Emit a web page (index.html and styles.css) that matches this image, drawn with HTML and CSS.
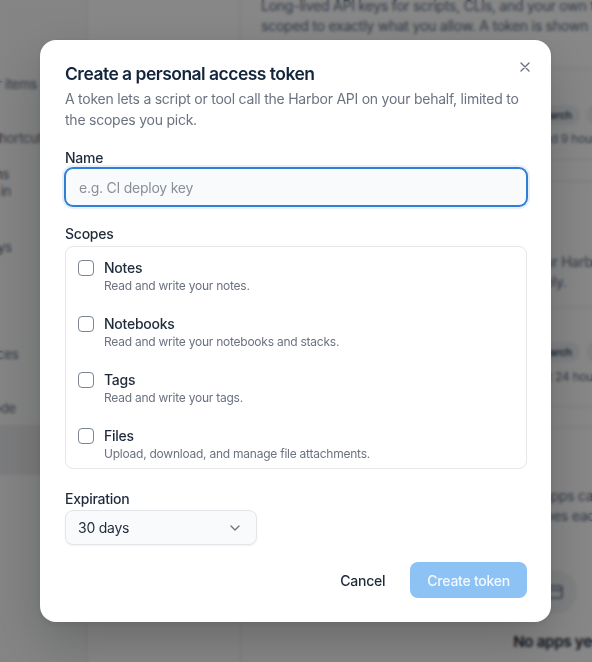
FILE: index.html
```html
<!DOCTYPE html>
<html lang="en">
<head>
<meta charset="utf-8">
<title>Create a personal access token</title>
<link rel="stylesheet" href="styles.css">
</head>
<body>
<div class="app">
  <aside class="rail">
    <div class="rail-item r1">Sidebar items</div>
    <div class="rail-item r2">Show shortcuts</div>
    <div class="rail-item r3">Sessions<br>Signed in</div>
    <div class="rail-item r4">Passkeys</div>
    <div class="rail-item r5">Resources</div>
    <div class="rail-item r6">Zen mode</div>
    <div class="rail-active"></div>
  </aside>
  <nav class="subnav"></nav>
  <main class="main">
    <p class="m-text m-intro">Long-lived API keys for scripts, CLIs, and your own tools,<br>scoped to exactly what you allow. A token is shown only once.</p>
    <section class="card card-a">
      <div class="card-row">
        <div class="row-name"></div>
        <div class="row-side">
          <div class="chips"><span class="chip">search</span><span class="chip">notes:read</span></div>
          <div class="meta">Used 9 hours ago</div>
        </div>
      </div>
      <div class="card-foot"></div>
    </section>
    <p class="m-text m-sec2">Each token can read and write the data in your Harbor account.<br>Revoking a token cuts off its access completely.</p>
    <section class="card card-b">
      <div class="card-row">
        <div class="row-name"></div>
        <div class="row-side">
          <div class="chips"><span class="chip">search</span><span class="chip">files</span></div>
          <div class="meta">Last 24 hours</div>
        </div>
      </div>
      <div class="card-foot"></div>
    </section>
    <p class="m-text m-sec3">Websites and tools you approve with OAuth apps can access your data.<br>They only see what you allow, within the scopes each app requested.</p>
    <div class="empty">
      <div class="empty-tile">
        <svg width="18" height="18" viewBox="0 0 18 18" fill="none" stroke="#64748b" stroke-width="1.6"><rect x="2" y="3" width="14" height="12" rx="2"/><path d="M2 7h14"/></svg>
      </div>
      <div class="empty-title">No apps yet</div>
    </div>
  </main>
</div>

<div class="overlay">
  <div class="modal" role="dialog" aria-labelledby="dlg-title">
    <button class="close" type="button" aria-label="Close">
      <svg width="10" height="10" viewBox="0 0 10 10" fill="none" stroke="#6b7280" stroke-width="1.4" stroke-linecap="round"><path d="M1 1l8 8M9 1L1 9"/></svg>
    </button>
    <h2 class="title" id="dlg-title">Create a personal access token</h2>
    <p class="desc">A token lets a script or tool call the Harbor API on your behalf, limited to the scopes you pick.</p>

    <label class="field-label label-name" for="tok-name">Name</label>
    <input class="input" id="tok-name" type="text" placeholder="e.g. CI deploy key">

    <div class="field-label label-scopes">Scopes</div>
    <div class="scopes">
      <label class="scope">
        <span class="check"></span>
        <span class="scope-text"><span class="scope-title">Notes</span><span class="scope-desc">Read and write your notes.</span></span>
      </label>
      <label class="scope">
        <span class="check"></span>
        <span class="scope-text"><span class="scope-title">Notebooks</span><span class="scope-desc">Read and write your notebooks and stacks.</span></span>
      </label>
      <label class="scope">
        <span class="check"></span>
        <span class="scope-text"><span class="scope-title">Tags</span><span class="scope-desc">Read and write your tags.</span></span>
      </label>
      <label class="scope">
        <span class="check"></span>
        <span class="scope-text"><span class="scope-title">Files</span><span class="scope-desc">Upload, download, and manage file attachments.</span></span>
      </label>
    </div>

    <div class="field-label label-exp">Expiration</div>
    <button class="select" type="button">
      <span>30 days</span>
      <svg width="10" height="6" viewBox="0 0 10 6" fill="none" stroke="#6b7280" stroke-width="1.3" stroke-linecap="round" stroke-linejoin="round"><path d="M1 1l4 4 4-4"/></svg>
    </button>

    <div class="actions">
      <button class="btn btn-cancel" type="button">Cancel</button>
      <button class="btn btn-primary" type="button" disabled>Create token</button>
    </div>
  </div>
</div>
</body>
</html>
```
FILE: styles.css
```css
* { box-sizing: border-box; }
html, body { margin: 0; height: 100%; }
body {
  font-family: Inter, "Noto Sans", "Liberation Sans", sans-serif;
  letter-spacing: -0.015em;
  background: #fff;
  overflow: hidden;
}
button, input { letter-spacing: inherit; }

/* ---------- background page ---------- */
.app {
  display: flex;
  height: 662px;
}
.rail {
  width: 87px;
  flex: none;
  background: #f9fafb;
  border-right: 1px solid #e5e7eb;
  display: flex;
  flex-direction: column;
  overflow: hidden;
}
.rail-item {
  font-size: 13px;
  line-height: 18px;
  color: #6b7280;
  white-space: nowrap;
  margin-left: -44px;
}
.r1 { margin-top: 75px; }
.r2 { margin-top: 36px; }
.r3 { margin-top: 19px; line-height: 17px; }
.r4 { margin-top: 38px; }
.r5 { margin-top: 89px; }
.r6 { margin-top: 36px; }
.rail-active {
  margin-top: 8px;
  height: 50px;
  background: #e9eaec;
}
.subnav {
  width: 154px;
  flex: none;
  border-right: 1px solid #e5e7eb;
  background: #fff;
}
.main {
  flex: 1;
  padding-left: 20px;
  overflow: hidden;
  min-width: 0;
}
.main > * { width: 560px; }
.m-text {
  margin: 0;
  font-size: 14px;
  line-height: 20px;
  color: #64748b;
  white-space: nowrap;
}
.m-intro { margin-top: -4px; }
.m-sec2 { margin-top: 70px; }
.m-sec3 { margin-top: 58px; }
.card {
  border: 1px solid #e5e7eb;
  border-radius: 10px;
}
.card-a { margin-top: 32px; }
.card-b { margin-top: 15px; }
.card-row {
  display: flex;
  padding: 36px 0 11px 16px;
  border-bottom: 1px solid #e5e7eb;
}
.card-b .card-row { padding-top: 34px; padding-bottom: 20px; }
.row-name {
  width: 251px;
  flex: none;
}
.chips { display: flex; gap: 6px; }
.chip {
  height: 20px;
  line-height: 20px;
  padding: 0 8px;
  border-radius: 10px;
  background: #eef1f5;
  color: #475569;
  font-size: 11px;
  font-weight: 600;
}
.meta {
  margin-top: 5px;
  font-size: 12px;
  line-height: 18px;
  color: #64748b;
}
.card-b .meta { margin-top: 6px; }
.card-foot { height: 21px; }
.card-b .card-foot { height: 20px; }
.empty {
  width: 200px;
  margin-left: 194px;
  margin-top: 44px;
  display: flex;
  flex-direction: column;
  align-items: center;
}
.empty-tile {
  width: 44px;
  height: 44px;
  border-radius: 50%;
  background: #f1f3f6;
  display: flex;
  align-items: center;
  justify-content: center;
}
.empty-title {
  margin-top: 17px;
  font-size: 15px;
  line-height: 22px;
  font-weight: 600;
  color: #1e293b;
}

/* ---------- overlay + dialog ---------- */
.overlay {
  position: fixed;
  inset: 0;
  background: rgba(0, 0, 0, 0.47);
  backdrop-filter: blur(1.5px);
}
.modal {
  position: relative;
  width: 511px;
  margin: 40px 0 0 40px;
  padding: 20px 24px 24px 25px;
  background: #fff;
  border-radius: 16px;
  box-shadow: 0 20px 50px rgba(0, 0, 0, 0.22), 0 2px 6px rgba(0, 0, 0, 0.08);
}
.close {
  position: absolute;
  top: 13px;
  right: 12px;
  width: 28px;
  height: 28px;
  border: 0;
  padding: 0;
  background: transparent;
  display: flex;
  align-items: center;
  justify-content: center;
  cursor: pointer;
}
.title {
  margin: 0;
  font-size: 17.5px;
  line-height: 28px;
  font-weight: 600;
  color: #13243b;
  letter-spacing: -0.03em;
}
.desc {
  margin: 0;
  font-size: 14px;
  line-height: 21px;
  color: #6b7280;
}
.field-label {
  display: block;
  font-size: 14px;
  line-height: 20px;
  font-weight: 500;
  color: #1f2a3b;
}
.label-name { margin-top: 18px; }
.label-scopes { margin-top: 18px; }
.label-exp { margin-top: 20px; }
.input {
  display: block;
  width: 100%;
  height: 38px;
  margin: 0;
  padding: 0 13px;
  border: 1px solid #2f7fd8;
  border-radius: 8px;
  box-shadow: 0 0 0 1px #2f7fd8, 0 0 0 3px rgba(47, 127, 216, 0.12);
  background: #f8fafc;
  font-family: inherit;
  font-size: 14px;
  color: #1f2a3b;
  outline: none;
}
.input::placeholder { color: #8b9098; }
.scopes {
  margin-top: 2px;
  border: 1px solid #e5e7eb;
  border-radius: 8px;
  padding: 11px 12px 6px;
  display: flex;
  flex-direction: column;
  gap: 20px;
}
.scope {
  display: flex;
  gap: 10px;
  align-items: flex-start;
  cursor: pointer;
}
.check {
  flex: none;
  width: 16px;
  height: 16px;
  margin-top: 2px;
  border: 1.5px solid #7d8590;
  border-radius: 4px;
  background: #fff;
}
.scope-text { display: flex; flex-direction: column; }
.scope-title {
  font-size: 14px;
  line-height: 20px;
  font-weight: 500;
  color: #1f2a3b;
}
.scope-desc {
  font-size: 12px;
  line-height: 16px;
  color: #6b7280;
}
.select {
  margin-top: 1px;
  width: 192px;
  height: 35px;
  padding: 0 16px 0 12px;
  display: flex;
  align-items: center;
  justify-content: space-between;
  border: 1px solid #e2e5ea;
  border-radius: 8px;
  background: #f8fafc;
  box-shadow: 0 1px 2px rgba(15, 23, 42, 0.06);
  font-family: inherit;
  font-size: 14px;
  color: #1f2a3b;
  cursor: pointer;
}
.actions {
  margin-top: 17px;
  display: flex;
  justify-content: flex-end;
  gap: 8px;
}
.btn {
  height: 36px;
  padding: 0 17px;
  border: 0;
  border-radius: 8px;
  font-family: inherit;
  font-size: 14px;
  font-weight: 500;
  cursor: pointer;
}
.btn-cancel {
  background: transparent;
  color: #1f2a3b;
}
.btn-primary {
  background: #8dc2f4;
  color: #f3f8fe;
}
```
